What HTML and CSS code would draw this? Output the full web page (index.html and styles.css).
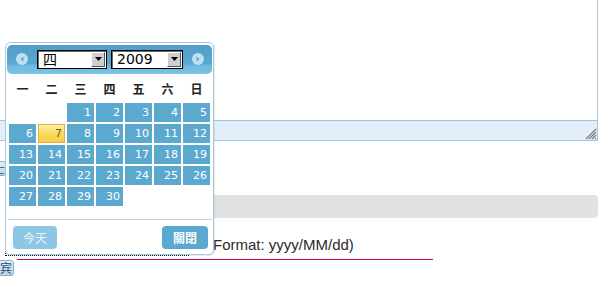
FILE: index.html
```html
<!DOCTYPE html>
<html lang="zh-Hant">
<head>
<meta charset="utf-8">
<title>Calendar</title>
<link rel="stylesheet" href="styles.css">
</head>
<body>
<div class="page">
  <div class="editor">
    <div class="editor-area"></div>
    <div class="editor-status">
      <svg class="grip" width="12" height="12" viewBox="0 0 12 12">
        <path d="M11 1 L1 11 M11 4 L4 11 M11 7 L7 11 M11 10 L10 11" stroke="#7d7d7d" stroke-width="1.2" fill="none"/>
      </svg>
    </div>
  </div>
  <button class="mini mini-a">士</button>
  <div class="greybar"></div>
  <div class="format-row">
    <div class="focus-box"></div>
    <span class="format">(Format: yyyy/MM/dd)</span>
  </div>
  <div class="redline"></div>
  <button class="mini mini-b">宾</button>
</div>

<div class="calendar">
  <div class="cal-head">
    <span class="nav">
      <svg width="12" height="12" viewBox="0 0 12 12"><circle cx="6" cy="6" r="6" fill="#bfe0f1"/><path d="M7.5 3.5 L4.5 6 L7.5 8.5 Z" fill="#5aa8d0"/></svg>
    </span>
    <div class="sel sel-month"><span class="sel-text">四</span><span class="sel-btn"><svg width="7" height="4" viewBox="0 0 7 4"><path d="M0 0 H7 L3.5 4 Z" fill="#000"/></svg></span></div>
    <div class="sel sel-year"><span class="sel-text">2009</span><span class="sel-btn"><svg width="7" height="4" viewBox="0 0 7 4"><path d="M0 0 H7 L3.5 4 Z" fill="#000"/></svg></span></div>
    <span class="nav">
      <svg width="12" height="12" viewBox="0 0 12 12"><circle cx="6" cy="6" r="6" fill="#bfe0f1"/><path d="M4.5 3.5 L7.5 6 L4.5 8.5 Z" fill="#5aa8d0"/></svg>
    </span>
  </div>
  <div class="weekdays">
    <span>一</span><span>二</span><span>三</span><span>四</span><span>五</span><span>六</span><span>日</span>
  </div>
  <div class="days">
    <span class="empty"></span><span class="empty"></span>
    <span class="day">1</span><span class="day">2</span><span class="day">3</span><span class="day">4</span><span class="day">5</span>
    <span class="day">6</span><span class="day today">7</span><span class="day">8</span><span class="day">9</span><span class="day">10</span><span class="day">11</span><span class="day">12</span>
    <span class="day">13</span><span class="day">14</span><span class="day">15</span><span class="day">16</span><span class="day">17</span><span class="day">18</span><span class="day">19</span>
    <span class="day">20</span><span class="day">21</span><span class="day">22</span><span class="day">23</span><span class="day">24</span><span class="day">25</span><span class="day">26</span>
    <span class="day">27</span><span class="day">28</span><span class="day">29</span><span class="day">30</span>
  </div>
  <div class="cal-sep"></div>
  <div class="cal-foot">
    <button class="btn btn-today">今天</button>
    <button class="btn btn-close">關閉</button>
  </div>
</div>
</body>
</html>
```

FILE: styles.css
```css
html, body {
  margin: 0;
  padding: 0;
  background: #fff;
  overflow: hidden;
}
body {
  width: 610px;
  height: 287px;
  font-family: "Liberation Sans", "Noto Sans CJK TC", sans-serif;
}
.page {
  position: relative;
}

/* editor */
.editor {
  width: 598px;
}
.editor-area {
  height: 120px;
  border-right: 1px solid #a9c1dc;
  box-sizing: border-box;
}
.editor-status {
  height: 21px;
  box-sizing: border-box;
  background: #e3eefb;
  border-top: 1px solid #a6c0e0;
  border-bottom: 1px solid #a6c0e0;
  border-right: 1px solid #a9c1dc;
  display: flex;
  justify-content: flex-end;
  align-items: flex-end;
}
.grip {
  display: block;
}

/* small buttons on page */
.mini {
  display: block;
  box-sizing: border-box;
  padding: 0;
  border: 1px solid #8eadc9;
  border-radius: 3px;
  background: linear-gradient(#e4eef7, #bcd3e7);
  color: #1d4f80;
  font: 12px/14px "Noto Sans CJK TC", sans-serif;
  text-align: right;
}
.mini-a {
  margin: 20px 0 0 -10px;
  width: 16px;
  height: 15px;
  padding-right: 0;
}
.mini-b {
  margin: 0 0 0 -10px;
  width: 24px;
  height: 16px;
  padding-right: 1px;
}

.greybar {
  margin: 19px 0 0 8px;
  width: 590px;
  height: 23px;
  background: #e1e1e1;
  border-radius: 4px;
}

.format-row {
  height: 41px;
  display: flex;
  align-items: flex-end;
}
.focus-box {
  margin: 0 0 3px 5px;
  width: 184px;
  height: 18px;
  box-sizing: border-box;
  border: 1px dotted #000;
  flex: none;
}
.format {
  margin: 0 0 6px 19px;
  font: 15px/17px "Liberation Sans", sans-serif;
  color: #2b2b2b;
  letter-spacing: 0;
}
.redline {
  margin-left: 17px;
  width: 416px;
  height: 1px;
  background: #c8102e;
}

/* calendar popup */
.calendar {
  position: absolute;
  left: 5px;
  top: 42px;
  width: 209px;
  box-sizing: border-box;
  padding: 2px 1px 5px;
  background: #fff;
  border: 1px solid #aac8db;
  border-radius: 5px;
  box-shadow: 1px 1px 1px rgba(120, 150, 170, 0.2);
}
.cal-head {
  height: 28px;
  border-radius: 5px;
  background: linear-gradient(#519fca 0%, #5aa8d1 65%, #6db9de 70%, #7cc3e5 100%);
  display: flex;
  align-items: center;
  padding: 0 8px 1px 9px;
}
.nav {
  display: block;
  width: 12px;
  height: 12px;
  flex: none;
}
.nav svg {
  display: block;
}
.sel {
  height: 19px;
  box-sizing: border-box;
  background: #fff;
  border: 1px solid #000;
  box-shadow: inset 1px 1px 0 #6b6b6b;
  display: flex;
  align-items: stretch;
  justify-content: space-between;
  flex: none;
}
.sel-month {
  width: 70px;
  margin-left: 9px;
}
.sel-year {
  width: 72px;
  margin-left: 4px;
  margin-right: 9px;
}
.sel-text {
  padding-left: 5px;
  font: 14px/16px "DejaVu Sans", "Noto Sans CJK TC", sans-serif;
  color: #000;
}
.sel-month .sel-text {
  font: 14px/16px "Noto Sans CJK TC", sans-serif;
}
.sel-btn {
  width: 14px;
  margin: 1px;
  box-sizing: border-box;
  background: #cfcfcf;
  border-top: 1px solid #fff;
  border-left: 1px solid #fff;
  border-right: 1px solid #555;
  border-bottom: 1px solid #555;
  display: flex;
  align-items: center;
  justify-content: center;
}
.sel-btn svg {
  display: block;
}

.weekdays {
  margin: 7px 0 0 2px;
  height: 16px;
  display: grid;
  grid-template-columns: repeat(7, 27px);
  column-gap: 2px;
}
.weekdays span {
  text-align: center;
  font: bold 12px/16px "Noto Sans CJK TC", sans-serif;
  color: #222;
}

.days {
  margin: 6px 0 0 2px;
  display: grid;
  grid-template-columns: repeat(7, 27px);
  grid-auto-rows: 19px;
  gap: 2px;
}
.day {
  background: #5ca9d0;
  color: #fff;
  font: 11px/19px "DejaVu Sans", sans-serif;
  text-align: right;
  padding-right: 3px;
}
.day.today {
  background: linear-gradient(#fdf0a6, #f8d85a 55%, #f5d04a);
  box-sizing: border-box;
  border: 1px solid #e2ad3a;
  line-height: 17px;
  padding-right: 2px;
  color: #7d5e22;
}

.cal-sep {
  margin: 13px 0 0 1px;
  height: 1px;
  background: #b9d0df;
}
.cal-foot {
  margin-top: 6px;
  display: flex;
  justify-content: space-between;
  padding: 0 4px 0 6px;
}
.btn {
  height: 23px;
  border: 0;
  border-radius: 4px;
  padding: 0;
  font: 12px/23px "Noto Sans CJK TC", sans-serif;
}
.btn-today {
  width: 44px;
  background: #8ec7e4;
  color: #eaf6fc;
}
.btn-close {
  width: 46px;
  background: #5ba8d0;
  color: #fff;
  font-weight: bold;
}
```
